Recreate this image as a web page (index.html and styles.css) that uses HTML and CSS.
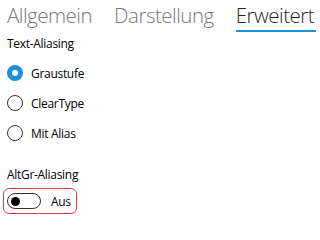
FILE: index.html
```html
<!DOCTYPE html>
<html lang="de">
<head>
<meta charset="utf-8">
<link rel="stylesheet" href="styles.css">
</head>
<body>
<div class="page">
  <nav class="tabs">
    <span class="tab">Allgemein</span>
    <span class="tab">Darstellung</span>
    <span class="tab active">Erweitert</span>
  </nav>
  <div class="label first">Text-Aliasing</div>
  <div class="radios">
    <div class="radio-row"><span class="radio checked"></span><span class="radio-text">Graustufe</span></div>
    <div class="radio-row"><span class="radio"></span><span class="radio-text">ClearType</span></div>
    <div class="radio-row"><span class="radio"></span><span class="radio-text">Mit Alias</span></div>
  </div>
  <div class="label second">AltGr-Aliasing</div>
  <div class="toggle-box">
    <span class="track"><span class="knob"></span></span>
    <span class="toggle-text">Aus</span>
  </div>
</div>
</body>
</html>
```
FILE: styles.css
```css
html, body {
  margin: 0;
  padding: 0;
  background: #ffffff;
}
body {
  width: 318px;
  height: 218px;
  overflow: hidden;
  font-family: "Open Sans", "Noto Sans", sans-serif;
  color: #000000;
}
.page {
  display: flex;
  flex-direction: column;
  align-items: flex-start;
}
.tabs {
  display: flex;
  gap: 22px;
  padding-left: 7px;
  height: 33px;
  align-items: flex-start;
}
.tab {
  font-size: 20.5px;
  font-weight: 300;
  line-height: 30px;
  color: #767676;
  letter-spacing: -0.5px;
}
.tab.active {
  color: #1f1f1f;
  border-bottom: 2px solid #1d8fdb;
  padding-right: 2px;
}
.label {
  font-size: 12px;
  line-height: 16px;
  padding-left: 7px;
  letter-spacing: -0.3px;
}
.label.first {
  margin-top: 3px;
}
.radios {
  display: flex;
  flex-direction: column;
  margin-top: 6px;
}
.radio-row {
  display: flex;
  align-items: center;
  height: 30px;
  padding-left: 7px;
}
.radio {
  box-sizing: border-box;
  width: 16px;
  height: 16px;
  border-radius: 50%;
  border: 1.5px solid #333333;
  margin-right: 8px;
}
.radio.checked {
  border: 5px solid #1d8fdb;
}
.radio-text {
  font-size: 12px;
  letter-spacing: -0.3px;
}
.label.second {
  margin-top: 19px;
}
.toggle-box {
  box-sizing: border-box;
  margin-top: 5px;
  margin-left: 3px;
  width: 74px;
  height: 26px;
  border: 1.5px solid #ee3b3b;
  border-radius: 6px;
  display: flex;
  align-items: center;
  padding-left: 3px;
}
.track {
  box-sizing: border-box;
  width: 34px;
  height: 16px;
  border: 1.5px solid #333333;
  border-radius: 8px;
  display: flex;
  align-items: center;
  padding-left: 3px;
}
.knob {
  width: 9px;
  height: 9px;
  border-radius: 50%;
  background: #000000;
}
.toggle-text {
  font-size: 12px;
  margin-left: 10px;
  letter-spacing: -0.3px;
}
```
